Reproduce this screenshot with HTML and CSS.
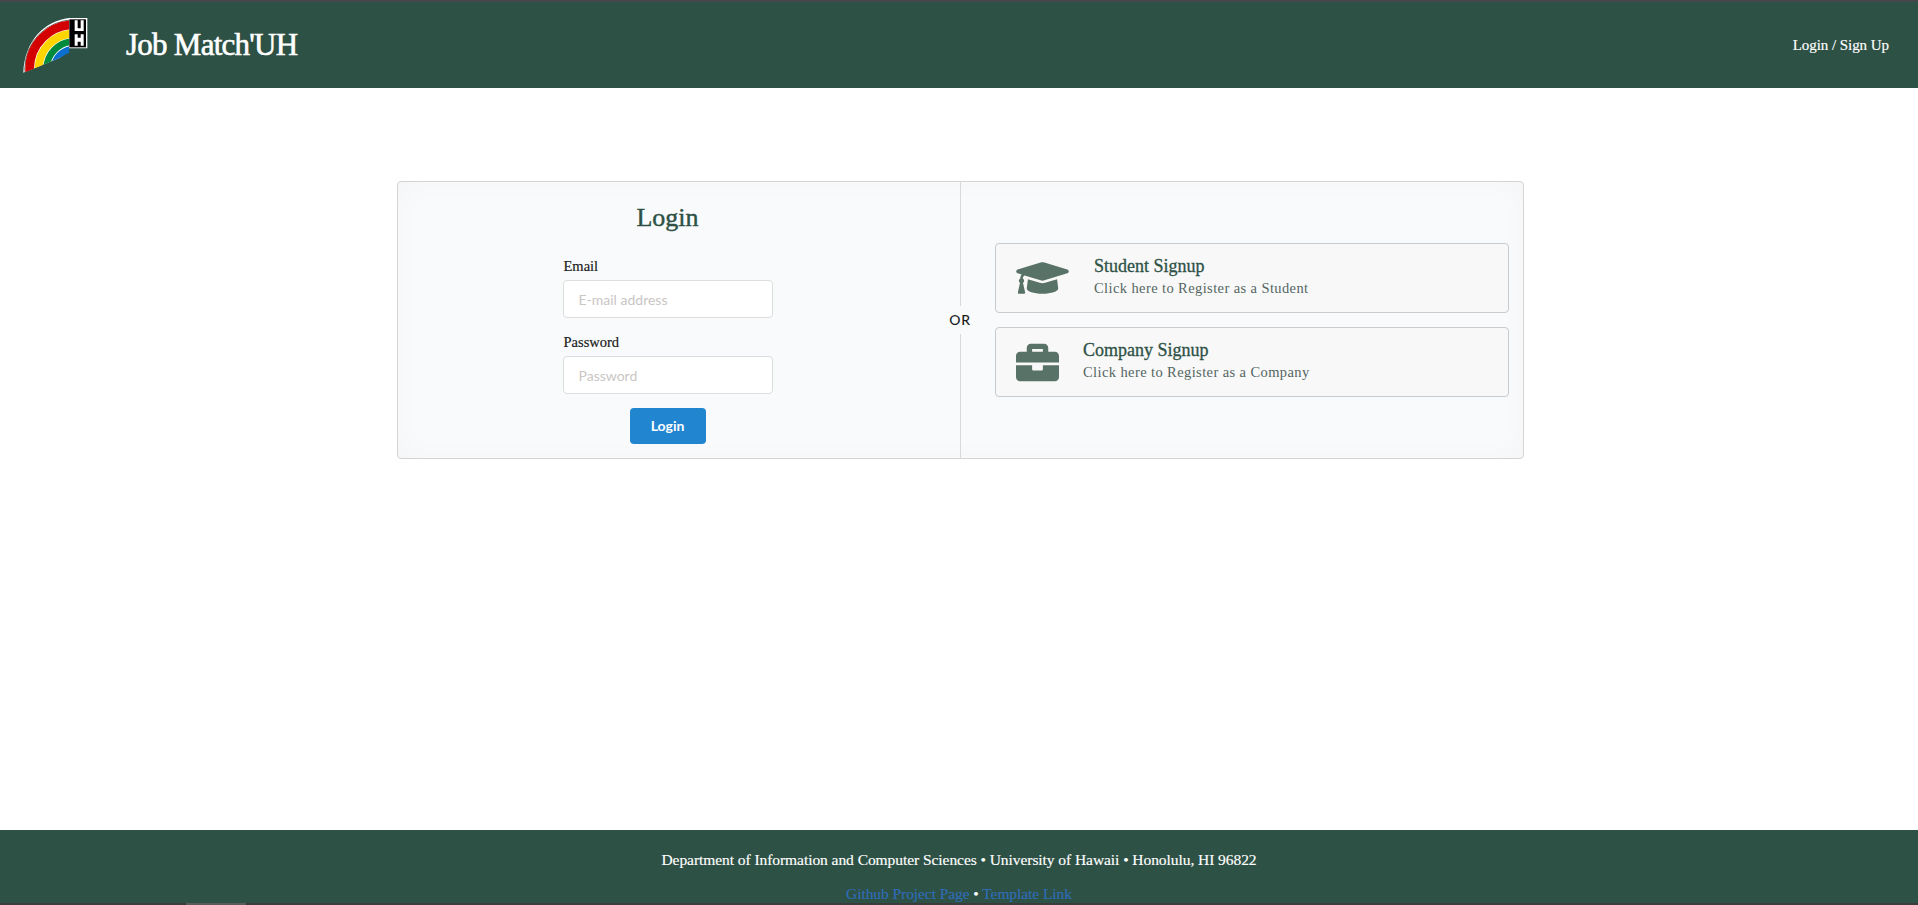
FILE: index.html
```html
<!DOCTYPE html>
<html lang="en">
<head>
<meta charset="utf-8">
<title>Job Match'UH</title>
<link rel="stylesheet" href="styles.css">
</head>
<body>
<div class="page">
  <header class="topbar">
    <svg class="logo" viewBox="0 0 270 225" aria-label="University of Hawaii logo">
      <defs>
        <clipPath id="arcClip"><polygon points="0,0 178,0 178,145 150,158 40,204 0,225"/></clipPath>
      </defs>
      <path d="M40 203C44 110 100 48 178 39H232V130H172L150 158Z" fill="#fff"/>
      <g clip-path="url(#arcClip)" fill="none">
        <circle cx="192" cy="192" r="147.500" stroke="#222" stroke-width="2"/>
        <circle cx="192" cy="192" r="133" stroke="#d40000" stroke-width="26"/>
        <circle cx="192" cy="192" r="106" stroke="#ffd500" stroke-width="24"/>
        <circle cx="192" cy="192" r="82" stroke="#008a3c" stroke-width="20"/>
        <circle cx="192" cy="192" r="60" stroke="#0b6fd0" stroke-width="19"/>
      </g>
      <path d="M178 43H228V127H178Z" fill="#000"/>
      <path d="M194 46h9v24h9v-24h9v32h-27zM194 88h9v10h9v-10h9v34h-9v-12h-9v12h-9z" fill="#fff"/>
    </svg>
    <a class="brand">Job Match'UH</a>
    <a class="signin">Login / Sign Up</a>
  </header>

  <main class="content">
    <section class="panel">
      <div class="login-col">
        <h2 class="login-title">Login</h2>
        <form class="login-form">
          <label class="field">
            <span class="field-label">Email</span>
            <input class="field-input" type="text" placeholder="E-mail address">
          </label>
          <label class="field">
            <span class="field-label">Password</span>
            <input class="field-input" type="password" placeholder="Password">
          </label>
          <button class="login-btn" type="button"><span class="login-btn-text">Login</span></button>
        </form>
      </div>
      <div class="or-mark">OR</div>
      <div class="signup-col">
        <a class="signup-card">
          <svg class="icon-cap" viewBox="0 0 640 512"><path d="M622.34 153.2L343.4 67.5c-15.2-4.67-31.6-4.67-46.79 0L17.66 153.2c-23.54 7.23-23.54 38.36 0 45.59l48.63 14.94c-10.67 13.19-17.23 29.28-17.88 46.9C38.78 266.15 32 276.11 32 288c0 10.78 5.68 19.85 13.86 25.65L20.33 428.53C18.11 438.52 25.71 448 35.94 448h56.11c10.24 0 17.84-9.48 15.62-19.47L82.14 313.65C90.32 307.85 96 298.78 96 288c0-11.57-6.47-21.25-15.66-26.87.76-15.02 8.44-28.3 20.69-36.72L296.6 284.5c9.06 2.78 26.44 6.25 46.79 0l278.95-85.7c23.55-7.24 23.55-38.36 0-45.6zM352.79 315.09c-28.53 8.76-52.84 3.92-65.59 0l-145.02-44.55L128 384c0 35.35 85.96 64 192 64s192-28.65 192-64l-14.18-113.47-145.03 44.56z"/></svg>
          <div class="signup-text">
            <div class="signup-head">Student Signup</div>
            <div class="signup-sub">Click here to Register as a Student</div>
          </div>
        </a>
        <a class="signup-card">
          <svg class="icon-case" viewBox="0 0 512 512"><path d="M320 336c0 8.84-7.16 16-16 16h-96c-8.84 0-16-7.16-16-16v-48H0v144c0 25.6 22.4 48 48 48h416c25.6 0 48-22.4 48-48V288H320v48zm144-208h-80V80c0-25.6-22.4-48-48-48H176c-25.6 0-48 22.4-48 48v48H48c-25.6 0-48 22.4-48 48v80h512v-80c0-25.6-22.4-48-48-48zm-144 0H192V96h128v32z"/></svg>
          <div class="signup-text">
            <div class="signup-head">Company Signup</div>
            <div class="signup-sub">Click here to Register as a Company</div>
          </div>
        </a>
      </div>
    </section>
  </main>

  <footer class="footer">
    <p class="footer-line">Department of Information and Computer Sciences • University of Hawaii • Honolulu, HI 96822</p>
    <p class="footer-links"><a class="footer-link">Github Project Page</a> • <a class="footer-link">Template Link</a></p>
  </footer>
  <div class="taskbar"><span class="taskbar-tab"></span></div>
</div>
</body>
</html>
```
FILE: styles.css
```css
* { box-sizing: border-box; }
html, body { margin: 0; height: 100%; overflow: hidden; background: #fff; }
body { font-family: "Liberation Serif", "DejaVu Serif", serif; }

.page {
  height: 905px;
  display: flex;
  flex-direction: column;
  border-top: 2px solid #45484a;
}

.topbar {
  flex: none;
  height: 86px;
  display: flex;
  align-items: center;
  padding: 0 29px 0 10px;
  background: #2e5145;
  color: #fff;
}
.logo { width: 90px; height: 75px; margin: 0 26px 5px 0; flex: none; }
.brand { font-size: 31px; letter-spacing: -.75px; font-weight: 400; -webkit-text-stroke: .6px #fff; }
.signin { margin-left: auto; font-size: 15px; letter-spacing: -.05px; -webkit-text-stroke: .15px #fff; }

.content { flex: 1; padding-top: 93px; }

.panel {
  position: relative;
  width: 1127px;
  height: 278px;
  margin-left: 397px;
  display: flex;
  border: 1px solid #d4d4d5;
  border-radius: 4px;
  background: #f9fafb;
  box-shadow: inset 0 0 30px rgba(0, 0, 0, .025);
}

.login-col {
  width: 563px;
  flex: none;
  border-right: 1px solid #d8d9da;
  padding: 17px 23px 0 0;
  display: flex;
  flex-direction: column;
  align-items: center;
}
.login-title {
  margin: 0;
  font-size: 26px;
  line-height: 37px;
  font-weight: 400;
  color: #2e5145;
  -webkit-text-stroke: .4px #2e5145;
}
.login-form {
  width: 210px;
  margin-top: 20px;
  display: flex;
  flex-direction: column;
  align-items: center;
}
.field { display: block; width: 100%; margin-bottom: 14px; }
.field-label {
  display: block;
  height: 24px;
  padding-left: 1px;
  font-size: 14.5px;
  line-height: 20px;
  color: #1b1c1d;
  -webkit-text-stroke: .2px #1b1c1d;
}
.field-input {
  display: block;
  width: 100%;
  height: 38px;
  padding: 0 15px;
  border: 1px solid #dcdddd;
  border-radius: 4px;
  background: #fff;
  font-family: Lato, sans-serif;
  font-size: 14px;
  outline: none;
}
.field-input::placeholder { color: #c9c6c4; opacity: 1; }
.login-btn {
  width: 76px;
  height: 36px;
  padding: 0 0 2px;
  border: 0;
  border-radius: 4px;
  background: #2185d0;
  color: #fff;
  font-family: Lato, sans-serif;
  font-size: 14px;
  font-weight: 700;
}

.or-mark {
  position: absolute;
  left: 547px;
  top: 124px;
  width: 30px;
  height: 28px;
  background: #f9fafb;
  text-align: center;
  font-family: Lato, sans-serif;
  font-size: 14px;
  font-weight: 500;
  letter-spacing: .6px;
  line-height: 28px;
  color: #1b1c1d;
}

.signup-col {
  flex: 1;
  padding: 61px 14px 0 34px;
  display: flex;
  flex-direction: column;
  gap: 14px;
}
.signup-card {
  height: 70px;
  display: flex;
  align-items: center;
  padding-left: 20px;
  border: 1px solid #c9cacb;
  border-radius: 4px;
  background: #f8f8f9;
}
.icon-cap { width: 53px; height: 42px; margin-right: 25px; fill: #597267; flex: none; }
.icon-case { width: 43px; height: 43px; margin-right: 24px; fill: #597267; flex: none; }
.signup-text { margin-bottom: 5px; }
.signup-head {
  font-size: 18px;
  line-height: 24px;
  color: #2e5145;
  -webkit-text-stroke: .3px #2e5145;
}
.signup-sub {
  font-size: 14.5px;
  line-height: 20px;
  letter-spacing: .4px;
  color: #54665f;
}

.footer {
  flex: none;
  height: 73px;
  overflow: hidden;
  padding-top: 20px;
  background: #2e5145;
  color: #fff;
  text-align: center;
  font-size: 15.5px;
  line-height: 19px;
}
.footer-line { margin: 0; letter-spacing: -.06px; -webkit-text-stroke: .15px #fff; }
.footer-links { margin: 15px 0 0; letter-spacing: -.07px; -webkit-text-stroke: .15px; }
.footer-link { color: #2f6db8; }

.taskbar { flex: none; height: 2px; background: #3a3c3c; padding-left: 186px; display: flex; }
.taskbar-tab { width: 60px; background: #5a5a5a; }
```
